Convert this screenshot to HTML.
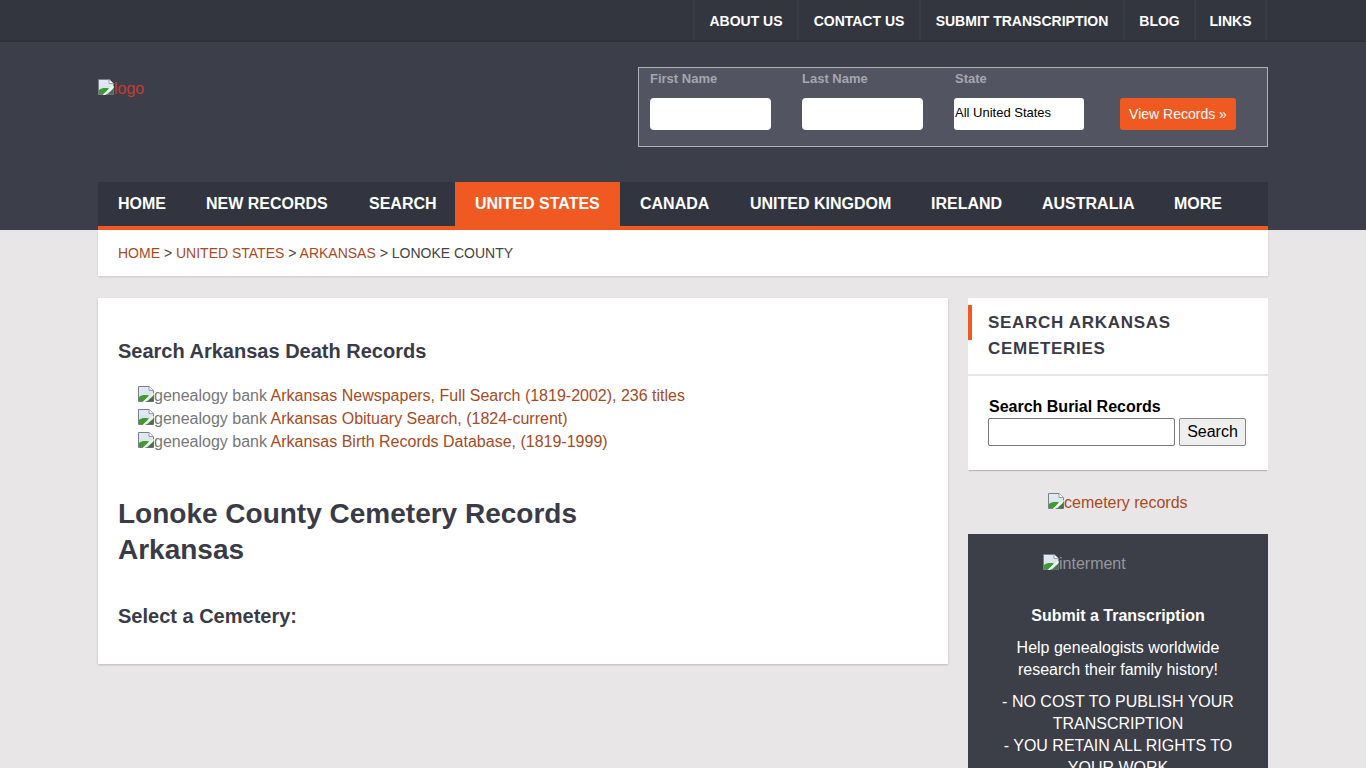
<!DOCTYPE html>
<html><head><meta charset="utf-8">
<style>
*{box-sizing:border-box;margin:0;padding:0}
html,body{width:1366px;height:768px;overflow:hidden}
body{background:#e8e6e6;font-family:"Liberation Sans",sans-serif;position:relative;color:#333}
.abs{position:absolute}
#topbar{left:0;top:0;width:1366px;height:42px;background:#33363f;border-bottom:2px solid #30323b}
#topbar .it{position:absolute;top:0;height:42px;line-height:42px;color:#fff;font-weight:bold;font-size:14px;text-align:center;border-left:2px solid #393c46;height:40px;line-height:42px}
#header{left:0;top:42px;width:1366px;height:188px;background:#3c3f49}
#logo{left:98px;top:79px;color:#c33c35;font-size:16px;white-space:nowrap}
#sform{left:638px;top:67px;width:630px;height:80px;border:1px solid #b0b1b8;background:#535461}
#sform label{position:absolute;top:3px;color:#a5a6b0;font-size:13px;font-weight:bold}
#sform .inp{position:absolute;top:30px;width:121px;height:32px;background:#fff;border-radius:4px}
#sform .btn{position:absolute;left:481px;top:30px;width:116px;height:32px;background:#f05a22;border-radius:3px;color:#fff;font-size:14px;line-height:32px;text-align:center}
#nav{left:98px;top:182px;width:1170px;height:48px;background:#32353f;border-bottom:4px solid #f05a22}
#nav .it{position:absolute;top:0;height:44px;line-height:43px;color:#fff;font-weight:bold;font-size:16px}
#nav .act{background:#f05a22}
#crumb{left:98px;top:230px;width:1170px;height:46px;background:#fff;box-shadow:0 1px 2px rgba(0,0,0,.12);font-size:14px;line-height:46px;padding-left:20px;color:#444}
#crumb a{color:#a84a1e;text-decoration:none}
#main{left:98px;top:298px;width:850px;height:366px;background:#fff;box-shadow:0 1px 2px rgba(0,0,0,.2)}
#side1{left:968px;top:298px;width:300px;height:172px;background:#fff;box-shadow:0 2px 1px -1px rgba(0,0,0,.2)}
#dark{left:968px;top:534px;width:300px;height:240px;background:#3c3e48}
.t{position:absolute;color:#3a3b47;font-weight:bold;white-space:nowrap}
h3.t{font-size:20px;line-height:24px}
h1.t{font-size:28px;line-height:36px}
h4.t{font-size:20px;line-height:24px}
.gb{position:absolute;font-size:16px;line-height:20px;white-space:nowrap;color:#777}
.gb a{color:#a84a1e}
.bi{display:inline-block;width:16px;height:16px;vertical-align:-1px}
#side1 .bar{position:absolute;left:0;top:7px;width:4px;height:35px;background:#f05a22}
#side1 .sh{position:absolute;left:20px;top:12px;letter-spacing:0.7px;font-size:17px;line-height:26px;font-weight:bold;color:#3a3b47}
#side1 .div{position:absolute;left:0;top:76px;width:300px;height:2px;background:#e5e5e5}
#side1 .lbl{position:absolute;left:21px;top:100px;font-size:16px;font-weight:bold;color:#000}
#side1 .sinp{position:absolute;left:20px;top:120px;width:187px;height:28px;border:1px solid #777;border-radius:2px;background:#fff}
#side1 .sbtn{position:absolute;left:211px;top:120px;width:67px;height:28px;border:1px solid #888;border-radius:2px;background:#efefef;font-size:16px;line-height:26px;text-align:center;color:#000}
#cem{left:1048px;top:493px;font-size:16px;color:#a84a1e;white-space:nowrap}
#dark #intm{position:absolute;left:75px;top:20px;font-size:16px;color:#96979f;white-space:nowrap}
#dark .st{position:absolute;left:0;top:73px;width:300px;text-align:center;color:#fff;font-weight:bold;font-size:16px}
#dark .hp{position:absolute;left:0;top:103px;width:300px;text-align:center;color:#fff;font-size:16px;line-height:22px}
#dark .hp2{position:absolute;left:0;top:157px;width:300px;text-align:center;color:#fff;font-size:16px;line-height:22px}
</style></head><body>
<div id="topbar" class="abs">
  <div class="it" style="left:693px;width:104px">ABOUT US</div>
  <div class="it" style="left:797px;width:122px">CONTACT US</div>
  <div class="it" style="left:919px;width:204px">SUBMIT TRANSCRIPTION</div>
  <div class="it" style="left:1123px;width:71px">BLOG</div>
  <div class="it" style="left:1194px;width:73px;border-right:2px solid #393c46">LINKS</div>
</div>
<div id="header" class="abs"></div>
<div id="logo" class="abs"><svg class="bi" width="16" height="16" viewBox="0 0 16 16"><defs><linearGradient id="sk" x1="0" y1="0" x2="0" y2="1"><stop offset="0" stop-color="#e4e8fa"/><stop offset="1" stop-color="#cfe6e0"/></linearGradient></defs><path d="M0.5 15.5V0.5H11L15.5 4.5V15.5Z" fill="url(#sk)" stroke="#7d7f86"/><path d="M11 0.5V4.5H15.5" fill="#fff" stroke="#9a9ca3"/><path d="M1 15V11C3.5 9 7 8.5 11 9.5L6 15Z" fill="#3f9b30"/><path d="M9 15.5L15.5 9.5V15.5Z" fill="#4d6b50"/><path d="M5.5 16.2L15.5 7.5" stroke="#eaffea" stroke-width="1.8"/></svg>logo</div>
<div id="sform" class="abs">
  <label style="left:11px">First Name</label>
  <div class="inp" style="left:11px"></div>
  <label style="left:163px">Last Name</label>
  <div class="inp" style="left:163px"></div>
  <label style="left:316px">State</label>
  <div class="inp" style="left:315px;width:130px;border-radius:3px;color:#000;font-size:13px;line-height:30px;padding-left:1px">All United States</div>
  <div class="btn">View Records &raquo;</div>
</div>
<div id="nav" class="abs">
  <div class="it" style="left:20px">HOME</div>
  <div class="it" style="left:108px">NEW RECORDS</div>
  <div class="it" style="left:271px">SEARCH</div>
  <div class="it act" style="left:357px;width:165px;padding-left:20px">UNITED STATES</div>
  <div class="it" style="left:542px">CANADA</div>
  <div class="it" style="left:652px">UNITED KINGDOM</div>
  <div class="it" style="left:833px">IRELAND</div>
  <div class="it" style="left:944px">AUSTRALIA</div>
  <div class="it" style="left:1076px">MORE</div>
</div>
<div id="crumb" class="abs"><a>HOME</a> &gt; <a>UNITED STATES</a> &gt; <a>ARKANSAS</a> &gt; LONOKE COUNTY</div>
<div id="main" class="abs">
  <h3 class="t" style="left:20px;top:41px">Search Arkansas Death Records</h3>
  <div class="gb" style="left:40px;top:88px"><svg class="bi" width="16" height="16" viewBox="0 0 16 16"><defs><linearGradient id="sk" x1="0" y1="0" x2="0" y2="1"><stop offset="0" stop-color="#e4e8fa"/><stop offset="1" stop-color="#cfe6e0"/></linearGradient></defs><path d="M0.5 15.5V0.5H11L15.5 4.5V15.5Z" fill="url(#sk)" stroke="#7d7f86"/><path d="M11 0.5V4.5H15.5" fill="#fff" stroke="#9a9ca3"/><path d="M1 15V11C3.5 9 7 8.5 11 9.5L6 15Z" fill="#3f9b30"/><path d="M9 15.5L15.5 9.5V15.5Z" fill="#4d6b50"/><path d="M5.5 16.2L15.5 7.5" stroke="#eaffea" stroke-width="1.8"/></svg><span class="alt">genealogy bank</span> <a>Arkansas Newspapers, Full Search (1819-2002), 236 titles</a></div>
  <div class="gb" style="left:40px;top:111px"><svg class="bi" width="16" height="16" viewBox="0 0 16 16"><defs><linearGradient id="sk" x1="0" y1="0" x2="0" y2="1"><stop offset="0" stop-color="#e4e8fa"/><stop offset="1" stop-color="#cfe6e0"/></linearGradient></defs><path d="M0.5 15.5V0.5H11L15.5 4.5V15.5Z" fill="url(#sk)" stroke="#7d7f86"/><path d="M11 0.5V4.5H15.5" fill="#fff" stroke="#9a9ca3"/><path d="M1 15V11C3.5 9 7 8.5 11 9.5L6 15Z" fill="#3f9b30"/><path d="M9 15.5L15.5 9.5V15.5Z" fill="#4d6b50"/><path d="M5.5 16.2L15.5 7.5" stroke="#eaffea" stroke-width="1.8"/></svg><span class="alt">genealogy bank</span> <a>Arkansas Obituary Search, (1824-current)</a></div>
  <div class="gb" style="left:40px;top:134px"><svg class="bi" width="16" height="16" viewBox="0 0 16 16"><defs><linearGradient id="sk" x1="0" y1="0" x2="0" y2="1"><stop offset="0" stop-color="#e4e8fa"/><stop offset="1" stop-color="#cfe6e0"/></linearGradient></defs><path d="M0.5 15.5V0.5H11L15.5 4.5V15.5Z" fill="url(#sk)" stroke="#7d7f86"/><path d="M11 0.5V4.5H15.5" fill="#fff" stroke="#9a9ca3"/><path d="M1 15V11C3.5 9 7 8.5 11 9.5L6 15Z" fill="#3f9b30"/><path d="M9 15.5L15.5 9.5V15.5Z" fill="#4d6b50"/><path d="M5.5 16.2L15.5 7.5" stroke="#eaffea" stroke-width="1.8"/></svg><span class="alt">genealogy bank</span> <a>Arkansas Birth Records Database, (1819-1999)</a></div>
  <h1 class="t" style="left:20px;top:198px">Lonoke County Cemetery Records<br>Arkansas</h1>
  <h4 class="t" style="left:20px;top:306px">Select a Cemetery:</h4>
</div>
<div id="side1" class="abs">
  <div class="bar"></div>
  <div class="sh">SEARCH ARKANSAS<br>CEMETERIES</div>
  <div class="div"></div>
  <div class="lbl">Search Burial Records</div>
  <div class="sinp"></div>
  <div class="sbtn">Search</div>
</div>
<div id="cem" class="abs"><svg class="bi" width="16" height="16" viewBox="0 0 16 16"><defs><linearGradient id="sk" x1="0" y1="0" x2="0" y2="1"><stop offset="0" stop-color="#e4e8fa"/><stop offset="1" stop-color="#cfe6e0"/></linearGradient></defs><path d="M0.5 15.5V0.5H11L15.5 4.5V15.5Z" fill="url(#sk)" stroke="#7d7f86"/><path d="M11 0.5V4.5H15.5" fill="#fff" stroke="#9a9ca3"/><path d="M1 15V11C3.5 9 7 8.5 11 9.5L6 15Z" fill="#3f9b30"/><path d="M9 15.5L15.5 9.5V15.5Z" fill="#4d6b50"/><path d="M5.5 16.2L15.5 7.5" stroke="#eaffea" stroke-width="1.8"/></svg><span>cemetery records</span></div>
<div id="dark" class="abs">
  <div id="intm"><svg class="bi" width="16" height="16" viewBox="0 0 16 16"><defs><linearGradient id="sk" x1="0" y1="0" x2="0" y2="1"><stop offset="0" stop-color="#e4e8fa"/><stop offset="1" stop-color="#cfe6e0"/></linearGradient></defs><path d="M0.5 15.5V0.5H11L15.5 4.5V15.5Z" fill="url(#sk)" stroke="#7d7f86"/><path d="M11 0.5V4.5H15.5" fill="#fff" stroke="#9a9ca3"/><path d="M1 15V11C3.5 9 7 8.5 11 9.5L6 15Z" fill="#3f9b30"/><path d="M9 15.5L15.5 9.5V15.5Z" fill="#4d6b50"/><path d="M5.5 16.2L15.5 7.5" stroke="#eaffea" stroke-width="1.8"/></svg><span>interment</span></div>
  <div class="st">Submit a Transcription</div>
  <div class="hp">Help genealogists worldwide<br>research their family history!</div>
  <div class="hp2">- NO COST TO PUBLISH YOUR<br>TRANSCRIPTION<br>- YOU RETAIN ALL RIGHTS TO<br>YOUR WORK</div>
</div>
</body></html>
